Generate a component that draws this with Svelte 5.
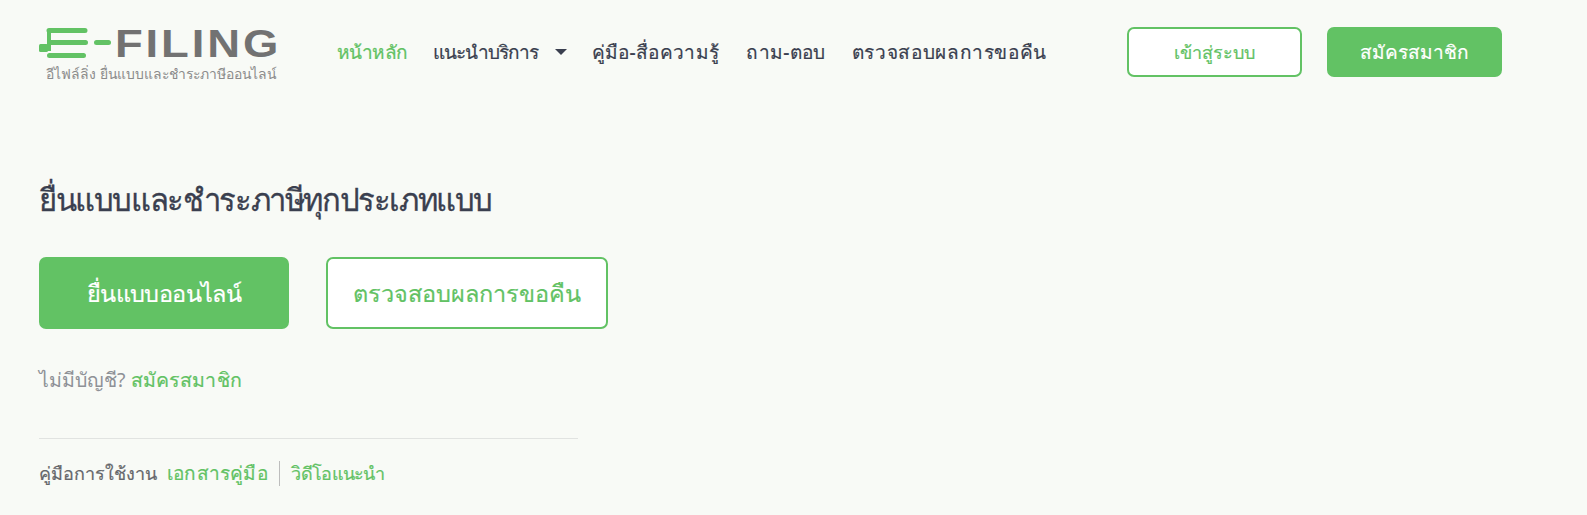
<script>
  const navItems = [
    { label: 'หน้าหลัก', active: true, cls: 'n1' },
    { label: 'แนะนำบริการ', caret: true, cls: 'n2' },
    { label: 'คู่มือ-สื่อความรู้', cls: 'n3' },
    { label: 'ถาม-ตอบ', cls: 'n4' },
    { label: 'ตรวจสอบผลการขอคืน', cls: 'n5' }
  ];
</script>

<div class="page">
  <header class="top">
    <div class="logo">
      <div class="logo-row">
        <svg class="mark" width="76" height="32" viewBox="0 0 76 32" aria-hidden="true">
          <path d="M10 3.500H46M10.500 15.500H46.500M10.500 28.500H44.500" stroke="#62c264" stroke-width="5" stroke-linecap="round" fill="none"/>
          <path d="M8 4h4v20H8z" fill="#62c264"/>
          <rect x="0" y="17" width="9" height="8" rx="1.500" fill="#62c264"/>
          <path d="M57.500 15.500H69.500" stroke="#62c264" stroke-width="5" stroke-linecap="round"/>
        </svg>
        <span class="word">FILING</span>
      </div>
      <div class="tag">อีไฟล์ลิ่ง ยื่นแบบและชำระภาษีออนไลน์</div>
    </div>
    <nav class="nav">
      {#each navItems as item}
        <a class="nav-link {item.cls}" class:active={item.active} href="#top">{item.label}{#if item.caret}<span class="caret"></span>{/if}</a>
      {/each}
    </nav>
    <div class="auth">
      <a class="btn outline small" href="#top">เข้าสู่ระบบ</a>
      <a class="btn solid small wide" href="#top">สมัครสมาชิก</a>
    </div>
  </header>

  <main class="hero">
    <h1>ยื่นแบบและชำระภาษีทุกประเภทแบบ</h1>
    <div class="cta">
      <a class="btn solid large first" href="#top">ยื่นแบบออนไลน์</a>
      <a class="btn outline large second" href="#top">ตรวจสอบผลการขอคืน</a>
    </div>
    <p class="signup">ไม่มีบัญชี? <a href="#top">สมัครสมาชิก</a></p>
    <hr />
    <div class="manual">
      <span class="m-label">คู่มือการใช้งาน</span>
      <a class="m-doc" href="#top">เอกสารคู่มือ</a>
      <span class="sep"></span>
      <a class="m-vid" href="#top">วิดีโอแนะนำ</a>
    </div>
  </main>
</div>

<style>
  :global(body) {
    margin: 0;
    background: #f8faf6;
  }
  .page {
    height: 515px;
    overflow: hidden;
    font-family: "Noto Sans", "Open Sans", sans-serif;
    font-weight: 500;
    color: #3a3f4f;
  }
  a { text-decoration: none; color: #62c264; }
  .top {
    display: flex;
    align-items: flex-start;
    padding: 27px 0 0 39px;
  }
  .logo { width: 298px; flex: none; }
  .logo-row { display: flex; align-items: center; height: 32px; }
  .mark { flex: none; }
  .word {
    display: inline-block;
    font-family: "Liberation Sans", sans-serif;
    font-size: 39.500px;
    font-weight: 700;
    line-height: 32px;
    color: #727272;
    letter-spacing: 2.500px;
    transform: scaleX(1.15);
    transform-origin: left center;
  }
  .tag { font-size: 13.900px; font-weight: 400; line-height: 18px; color: #8b8b8b; margin: 6px 0 0 7px; white-space: nowrap; }
  .nav { display: flex; width: 790px; flex: none; height: 50px; align-items: center; }
  .nav-link { font-size: 19px; color: #3a3f4f; white-space: nowrap; display: flex; align-items: center; -webkit-text-stroke: 0.200px currentColor; }
  .nav-link.active { color: #62c264; }
  .n1 { letter-spacing: -0.600px; margin-right: 26px; }
  .n2 { letter-spacing: -1.100px; margin-right: 25px; }
  .n3 { letter-spacing: 0.350px; margin-right: 27px; }
  .n4 { letter-spacing: 0.300px; margin-right: 26px; }
  .n5 { letter-spacing: 0.650px; }
  .caret { width: 0; height: 0; border: 6px solid transparent; border-top: 6px solid #3a3f4f; border-bottom: 0; margin-left: 17px; }
  .auth { display: flex; gap: 25px; }
  .btn { display: flex; align-items: center; justify-content: center; box-sizing: border-box; border-radius: 7px; border: 2px solid #62c264; -webkit-text-stroke: 0.200px currentColor; }
  .solid { background: #62c264; color: #fff; }
  .outline { background: #fff; color: #62c264; }
  .small { width: 175px; height: 50px; font-size: 18px; }
  .wide { font-size: 19px; }
  .large { height: 72px; font-size: 23.500px; }
  .first { width: 250px; letter-spacing: -0.600px; }
  .second { width: 282px; }
  .hero { padding: 0 0 0 39px; }
  h1 { margin: 94px 0 0; font-size: 31px; line-height: 44px; font-weight: 500; letter-spacing: -1.400px; -webkit-text-stroke: 0.300px currentColor; }
  .cta { display: flex; gap: 37px; margin-top: 36px; }
  .signup { margin: 37px 0 0; font-size: 19.500px; font-weight: 400; line-height: 28px; color: #8e9196; }
  .signup a { letter-spacing: 0.300px; -webkit-text-stroke: 0.200px currentColor; }
  hr { width: 539px; margin: 44px 0 0; border: 0; border-top: 1px solid #e1e3e1; }
  .manual { display: flex; align-items: center; margin-top: 20px; font-size: 18px; line-height: 28px; -webkit-text-stroke: 0.200px currentColor; }
  .m-label { color: #65676b; margin-right: 10px; }
  .m-doc { font-size: 19px; letter-spacing: 0.200px; }
  .m-vid { letter-spacing: -0.700px; }
  .sep { width: 1.500px; height: 25px; background: #bdbdbd; margin: 0 11px; }
</style>
